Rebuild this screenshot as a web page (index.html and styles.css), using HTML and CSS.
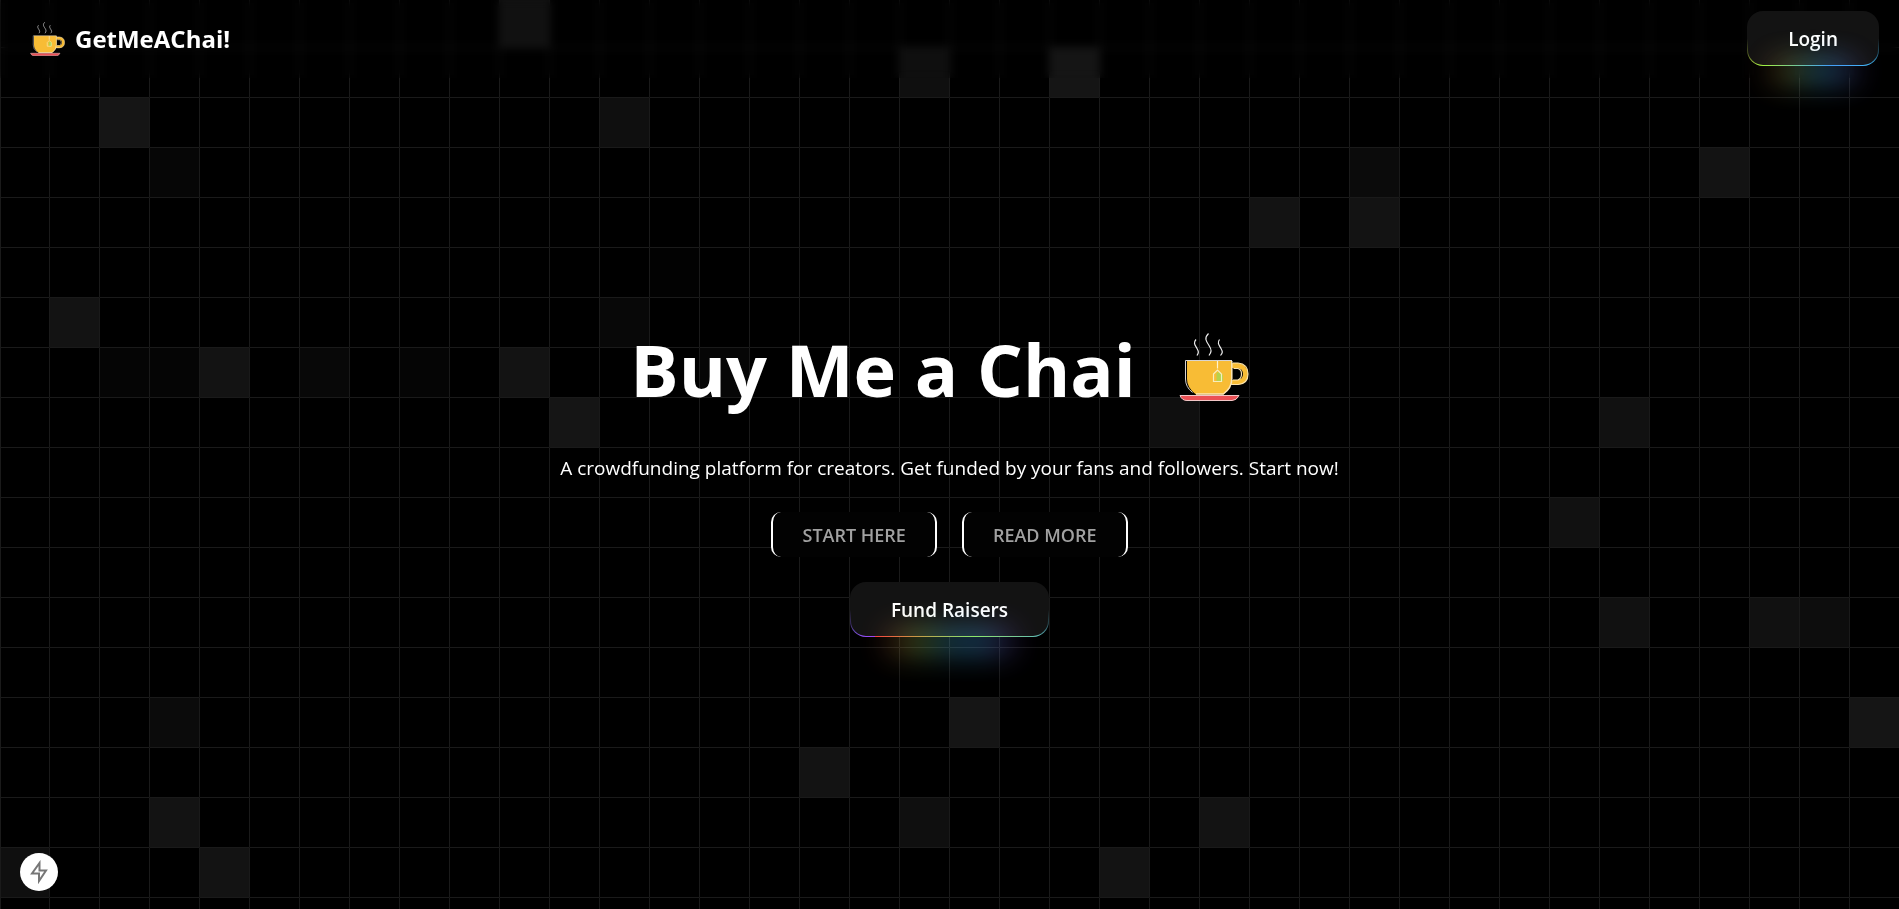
FILE: index.html
```html
<!DOCTYPE html>
<html lang="en">
<head>
<meta charset="utf-8">
<title>GetMeAChai</title>
<link rel="stylesheet" href="styles.css">
</head>
<body>
<svg class="grid" aria-hidden="true">
  <defs>
    <pattern id="cells" x="-1" y="-3" width="50" height="50" patternUnits="userSpaceOnUse">
      <path d="M.5 50V.5H50" fill="none" stroke="#1a1a1a"/>
    </pattern>
  </defs>
  <g fill="#151515">
    <rect x="500" y="-2" width="49" height="49" opacity=".8"/>
    <rect x="900" y="48" width="49" height="49" opacity=".7"/>
    <rect x="1050" y="48" width="49" height="49"/>
    <rect x="100" y="98" width="49" height="49"/>
    <rect x="600" y="98" width="49" height="49" opacity=".7"/>
    <rect x="150" y="148" width="49" height="49" opacity=".3"/>
    <rect x="1350" y="148" width="49" height="49" opacity=".5"/>
    <rect x="1700" y="148" width="49" height="49" opacity=".9"/>
    <rect x="1250" y="198" width="49" height="49" opacity=".9"/>
    <rect x="1350" y="198" width="49" height="49" opacity=".9"/>
    <rect x="650" y="248" width="49" height="49" opacity=".1"/>
    <rect x="50" y="298" width="49" height="49" opacity=".9"/>
    <rect x="600" y="298" width="49" height="49" opacity=".4"/>
    <rect x="100" y="348" width="49" height="49" opacity=".25"/>
    <rect x="150" y="348" width="49" height="49" opacity=".25"/>
    <rect x="200" y="348" width="49" height="49" opacity=".9"/>
    <rect x="300" y="348" width="49" height="49" opacity=".4"/>
    <rect x="400" y="348" width="49" height="49" opacity=".25"/>
    <rect x="500" y="348" width="49" height="49" opacity=".9"/>
    <rect x="700" y="348" width="49" height="49" opacity=".3"/>
    <rect x="550" y="398" width="49" height="49"/>
    <rect x="1150" y="398" width="49" height="49" opacity=".7"/>
    <rect x="1600" y="398" width="49" height="49" opacity=".8"/>
    <rect x="1550" y="498" width="49" height="49" opacity=".8"/>
    <rect x="1600" y="598" width="49" height="49" opacity=".8"/>
    <rect x="1750" y="598" width="49" height="49" opacity=".8"/>
    <rect x="1800" y="598" width="49" height="49" opacity=".6"/>
    <rect x="150" y="698" width="49" height="49" opacity=".5"/>
    <rect x="950" y="698" width="49" height="49"/>
    <rect x="1850" y="698" width="49" height="49"/>
    <rect x="800" y="748" width="49" height="49" opacity=".9"/>
    <rect x="150" y="798" width="49" height="49" opacity=".9"/>
    <rect x="900" y="798" width="49" height="49" opacity=".7"/>
    <rect x="1200" y="798" width="49" height="49" opacity=".9"/>
    <rect x="0" y="848" width="49" height="49" opacity=".7"/>
    <rect x="200" y="848" width="49" height="49" opacity=".9"/>
    <rect x="1100" y="848" width="49" height="49" opacity=".9"/>
  </g>
  <rect width="100%" height="100%" fill="url(#cells)"/>
  <path d="M.5 0V4000" stroke="#1a1a1a"/>
  <symbol id="chai" viewBox="0 0 70 68">
    <path d="M17 6.500C14 10 16 12 18 15.500S19.500 20 18 22.500M29.500.500C25 5 27 8 30 12.500S32.500 19 30 22.500M40.500 6.500C38 10 40 12 42 15.500S43.500 20 41.500 22.500" fill="none" stroke="#eee" stroke-width="1.200"/>
    <path d="M53 32.500h5.500q8 1 8 8.500t-8 8.500H51.500" fill="none" stroke="#f8bc35" stroke-width="5"/>
    <path d="M54 30h5q10 1 10 11t-10 10.500h-7M54.500 35.500H59q3.500 1 3.500 5.500t-3.500 6h-5" fill="none" stroke="#fbe3ae" stroke-width="1.200"/>
    <path d="M8 27.500H53V46q0 9-8.500 15.500H17Q8 55 8 46z" fill="#f8bc35"/>
    <path d="M52.800 28V46q0 9-8.500 15H17" fill="none" stroke="#fbe5b5" stroke-width="1.500"/>
    <path d="M53 27.500H6.500V46q0 8 7 13.500" fill="none" stroke="#d8d4d0"/>
    <path d="M38.500 28v7.500" stroke="#fff3d0" stroke-width="1.200"/>
    <path d="M34.500 41l4-4 4 4v7.500h-8z" fill="#f8bc35"/>
    <path d="M37.500 40l3-1 3.500 3v6h-6.500z" fill="#b5d24c"/>
    <path d="M34.500 41l4-4 4 4v7.500h-8z" fill="none" stroke="#f7eebc" stroke-width="1.200"/>
    <path d="M1 62.500H60q-2.500 5-7 5H8q-5 0-7-5z" fill="#eb5055" stroke="#f2c6c6"/>
  </symbol>
</svg>

<header class="nav">
  <a class="brand" href="#"><svg class="brand-icon" viewBox="0 0 70 68" aria-hidden="true"><use href="#chai" width="70" height="68"/></svg>GetMeAChai!</a>
  <button class="rainbow rainbow-login" type="button">Login</button>
</header>

<main class="hero">
  <h1 class="title">Buy Me a Chai <svg class="title-icon" viewBox="0 0 70 72" aria-hidden="true"><use href="#chai" width="70" height="68"/></svg></h1>
  <p class="lead">A crowdfunding platform for creators. Get funded by your fans and followers. Start now!</p>
  <div class="actions">
    <button class="outline" type="button">START HERE</button>
    <button class="outline" type="button">READ MORE</button>
  </div>
  <button class="rainbow rainbow-fund" type="button">Fund Raisers</button>
</main>

<button class="badge" type="button" aria-label="Static route">
  <svg viewBox="0 0 24 24" width="24" height="24" aria-hidden="true"><path d="M12.500 3v7.500h6.500L12 21v-7.500H5z" fill="none" stroke="#777" stroke-width="2"/></svg>
</button>
</body>
</html>
```
FILE: styles.css
```css
* { box-sizing: border-box; }
body {
  margin: 0;
  min-height: 100vh;
  display: flex;
  flex-direction: column;
  background: #000;
  color: #fff;
  font-family: "Segoe UI", "Open Sans", "Noto Sans", sans-serif;
  overflow: hidden;
}
button { font: inherit; color: inherit; cursor: pointer; }
.grid { position: fixed; inset: 0; width: 100%; height: 100%; z-index: -1; }
.nav {
  display: flex;
  align-items: center;
  justify-content: space-between;
  height: 78px;
  padding: 0 20px 1px 30px;
  backdrop-filter: blur(4px);
}
.brand {
  display: flex;
  align-items: center;
  gap: 10px;
  color: #fff;
  font-size: 24px;
  font-weight: 700;
  text-decoration: none;
}
.brand-icon { width: 35px; height: 34px; }
.hero {
  flex: 1;
  display: flex;
  flex-direction: column;
  align-items: center;
  padding-top: 243px;
}
.title {
  display: flex;
  align-items: center;
  gap: 43px;
  margin: 0;
  padding-right: 20px;
  font-size: 72px;
  line-height: 96px;
  font-weight: 700;
}
.title-icon { width: 70px; height: 72px; }
.lead { margin: 37px 0 30px; font-size: 19px; line-height: 28px; }
.actions { display: flex; gap: 25px; margin-bottom: 25px; }
.outline {
  height: 45px;
  padding: 0 29px;
  border: solid #fff;
  border-width: 0 2px;
  border-radius: 10px;
  background: #020202;
  color: #a1a1a1;
  font-size: 18px;
  font-weight: 600;
}
.rainbow {
  position: relative;
  height: 55px;
  padding: 0 40px;
  border: 1px solid transparent;
  border-radius: 16px;
  font-size: 19px;
  font-weight: 600;
  background:
    linear-gradient(#131313, #131313) padding-box,
    linear-gradient(#131313 50%, rgba(18, 18, 19, .6) 80%, rgba(18, 18, 19, 0)) border-box,
    linear-gradient(90deg, #ff4242, #a1ff42, #42a1ff, #42d0ff, #a142ff) var(--shift) 0 / 200% border-box;
}
.rainbow::before {
  content: "";
  position: absolute;
  left: 20%;
  bottom: -20%;
  width: 60%;
  height: 20%;
  background: linear-gradient(90deg, #ff4242, #a1ff42, #42a1ff, #42d0ff, #a142ff);
  filter: blur(16px);
  opacity: .85;
}
.rainbow-fund { --shift: 25px; }
.rainbow-login { --shift: -50px; }
.badge {
  position: fixed;
  left: 20px;
  bottom: 18px;
  display: grid;
  place-items: center;
  width: 38px;
  height: 38px;
  padding: 0;
  border: 0;
  border-radius: 50%;
  background: #fff;
}
```
